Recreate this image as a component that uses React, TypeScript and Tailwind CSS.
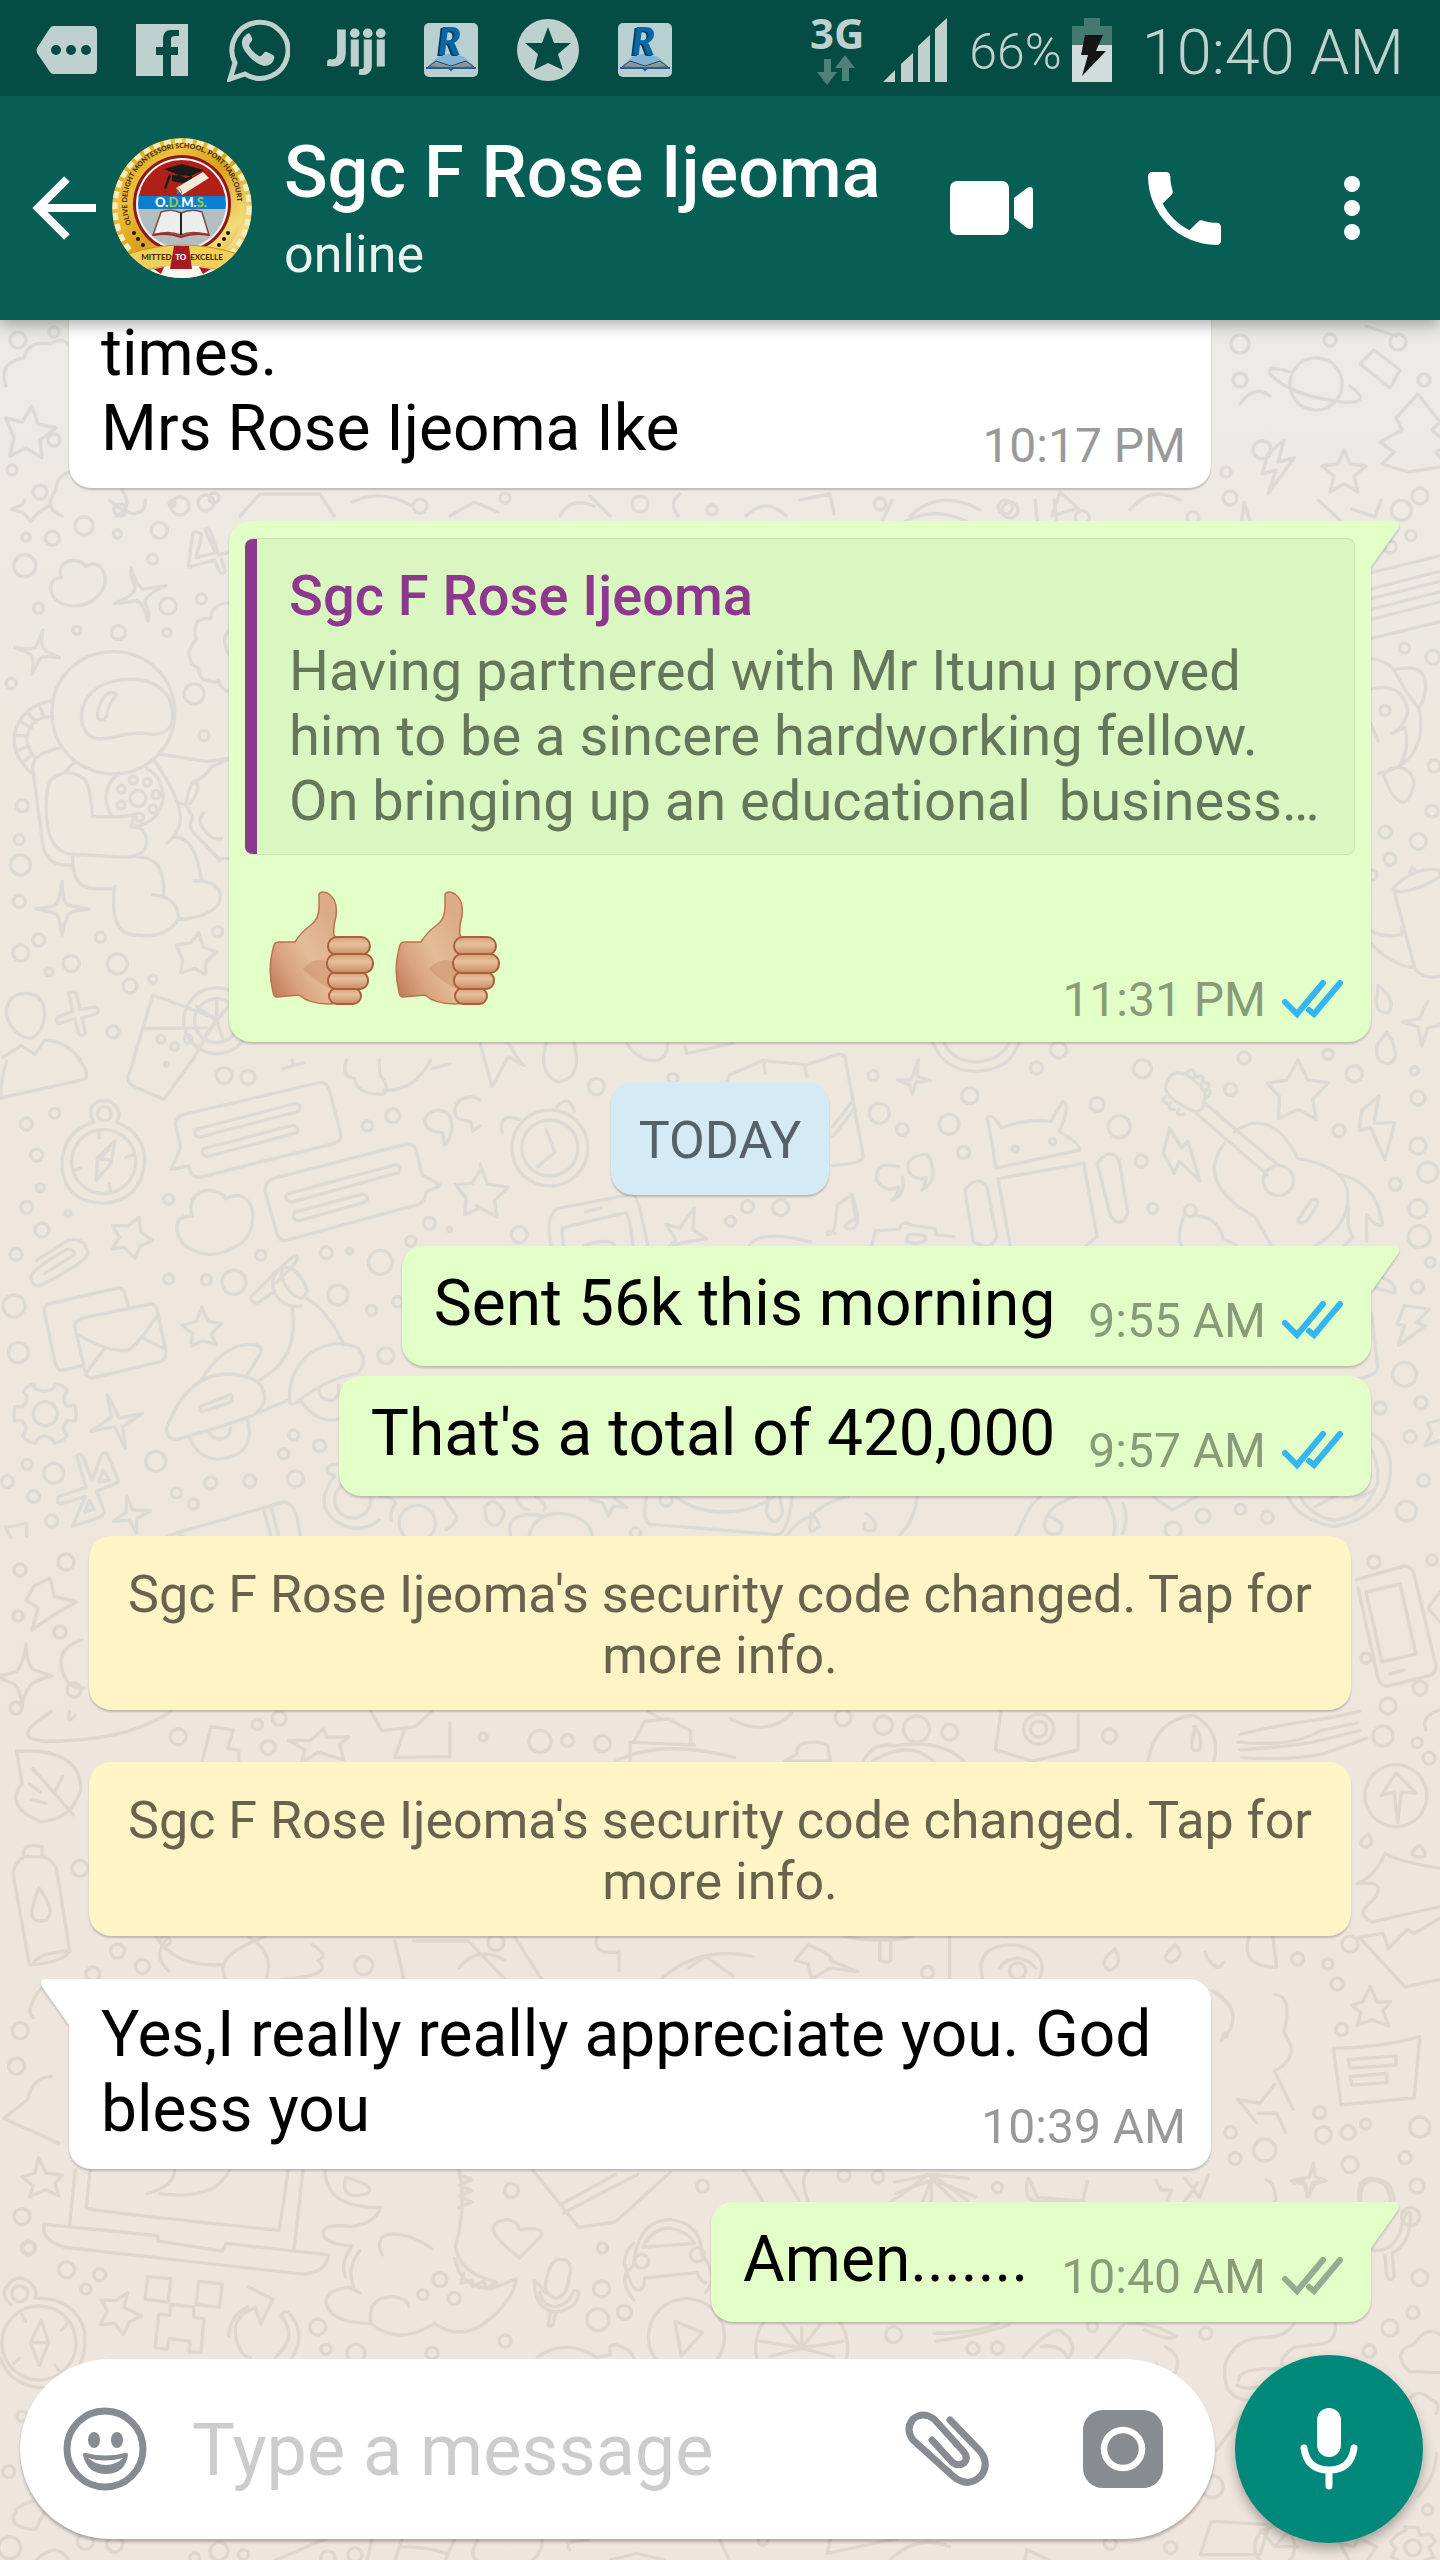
import type { ReactNode } from "react";

/* ---------- Wallpaper ---------- */

type Ring = [number, number, number];

type RegionProps = {
  x: number;
  y: number;
  sx: number;
  sy: number;
  color: string;
  rings: Ring[];
  paths: string[];
};

const COOL = "#dcdad6";
const WARM = "#dfd7cd";

/* One part of the doodle wallpaper, with its own drawing scale. */
function Region({ x, y, sx, sy, color, rings, paths }: RegionProps) {
  return (
    <g stroke={color} strokeWidth="3.4" fill="none" strokeLinecap="round" strokeLinejoin="round">
      {rings.map(([cx, cy, r], i) => (
        <circle key={i} cx={x + cx / sx} cy={y + cy / sy} r={r} />
      ))}
      <g transform={`translate(${x} ${y}) scale(${1 / sx} ${1 / sy})`}>
        {paths.map((d, i) => (
          <path key={i} d={d} vectorEffect="non-scaling-stroke" />
        ))}
      </g>
    </g>
  );
}

const regions: RegionProps[] = [
  {
    x: 0, y: 320, sx: 1, sy: 1, color: COOL,
    rings: [[18, 20, 8], [54, 12, 5], [12, 150, 5], [54, 120, 6], [40, 172, 7], [120, 190, 6], [180, 186, 9], [214, 178, 5],
      [420, 186, 7], [505, 178, 5], [640, 184, 8], [712, 190, 5], [880, 184, 6], [1010, 190, 8], [1240, 60, 7], [1262, 130, 9],
      [1226, 152, 5], [1398, 22, 8], [1424, 60, 6], [1330, 20, 6], [1240, 24, 9], [1420, 176, 8], [1230, 178, 7]],
    paths: [
      "M6 66q-8-24 18-28 4-18 26-14 16-10 22 8",
      "M6 98l16 4 10-16 6 18 18 4-16 12 2 18-16-10-16 8 4-18z",
      "M62 196q-20-8-6-26 0-18 24-20 10-14 26-2 20 0 16 22 12 18-6 26",
      "M240 196l20-22h60l14 22M352 182q30-14 60 4M450 196l24-14 24 10M560 196q10-20 34-10M590 176l20 20M680 174q-12 8-2 22",
      "M746 196q20-20 40 0M800 180l30-6 4 20M910 196q30-28 70-6M1060 172l-8 24 26-8zM1130 190q20-26 50-10",
      "M1290 62a26 26 0 1 0 52 4a26 26 0 1 0-52-4M1290 52q-24-8-20 2 20 22 72 28 32 2 8-16",
      "M1268 134l16-14-6 22 16-4-26 36 8-24-14 4z",
      "M1240 84q14-20 30-8",
      "M1408 152l-26-8 12-12-14-10 22-12-6-12 22-24 22 28-8 8 16 14-12 8 10 14z",
      "M1344 130l6 14 16 2-12 10 4 16-14-8-14 8 4-16-12-10 16-2z",
      "M1360 44l14-14 26 20-10 18zM1366 6l30 10",
    ],
  },
  {
    x: 0, y: 500, sx: 3, sy: 2.8, color: COOL,
    rings: [[78, 104, 4], [157, 107, 7], [252, 72, 9], [352, 95, 4], [478, 85, 8], [74, 184, 11], [458, 166, 5], [116, 303, 5],
      [504, 297, 8], [604, 277, 5], [230, 365, 4], [355, 371, 7], [501, 371, 4], [34, 514, 5], [582, 543, 10], [612, 660, 5],
      [67, 856, 6], [58, 951, 5], [61, 1022, 10], [58, 1124, 6], [116, 1232, 6], [62, 1268, 8], [214, 1298, 8], [147, 1321, 4],
      [301, 1224, 5], [352, 1299, 10], [390, 1361, 7], [458, 1341, 4], [653, 1209, 5], [339, 1489, 6], [483, 1510, 4], [524, 1530, 4],
      [564, 1509, 4], [516, 10, 3], [618, 8, 8], [414, 836, 8], [400, 784, 4], [442, 791, 4], [468, 825, 4], [459, 865, 4],
      [419, 888, 4], [363, 854, 4], [364, 810, 4], [650, 1458, 22], [650, 1458, 33]],
    paths: [
      "M36 26l30-12 8-14M150 14l-34 20-24 26-22-24-34-10",
      "M330 2q50 38 74 36 34-6 32-38",
      "M184 218q-12-40 28-48 34-4 44 16 34-18 52 10 18 34-6 64-34 40-90 36-56-6-60-50 2-28 32-28",
      "M394 190q14 50 36 60l68-10q-56 22-64 44 18 34 10 54-14-48-34-56l-66 8q58-22 62-44-18-38-12-56z",
      "M128 364q-8 44 8 58l42 20q-48-8-58 2-14 24-24 44 8-48-8-58l-44-18q50 8 62 2 14-24 22-50z",
      "M594 92q-14-8-16 4l-12 84q-2 10 8 6l70-18 14 32q10 12 18-2l-12-32M616 84q8-8 16 4l24 66 26-6M594 92q12 0 10 8l-16 62 58-14-30-64",
      "M687 288q-50 0-56 44-48-4-46 36-4 14 6 20-34 36-20 56 0 18 24 26 0 32 34 38 20 4 26-4 8 28 32 32M687 364q-26 26 0 70",
      "M340 425c100 0 184 70 184 170s-84 172-184 172-184-72-184-172 84-170 184-170z",
      "M392 502c80 0 118 40 124 84 8 40-4 70-60 70-80-12-120 18-164 12-36-6-56-40-44-86 12-44 60-80 144-80z",
      "M318 544q22-12 32 2-28 30-30 58-6 16-22 10-12-8 2-44z",
      "M156 562q-70 10-100 60-40 76 38 142M150 606q-60 4-70 60 2 34 26 56M60 620l34 18M84 596l24 26M118 574l12 30M42 660h38M50 702l36-12M66 736l30-22",
      "M184 694q-90 14-86 60l32 220q14 44 60 48h28",
      "M220 738q-16 10-22 26 64-2 72 62l8 60q90 4 128-6-10 20-12 36 42-2 46 36 2 48-68 48l-154-8q-60-4-76-80-8-60 2-112 14-32 62-38",
      "M318 832a92 86 0 0 1 38-66M440 752a92 86 0 0 1-48 162M318 832q0 30 18 52",
      "M218 994q-4 90 60 94l66 0M344 1082q-18 134 60 136 96 12 132-46-2-48-50-62l-28-4M412 1000q86-2 78 106",
      "M464 732q100 130 70 190-8 18-34 40M520 944q64-6 84 118M582 1066q70-2 80 40-2 60-124 68",
      "M484 712l134 20 66-8M540 850l18 2q10-60 28-62 20 10-14 60M580 790q30-10 56-44l50-20M558 854l20 36q-20 30 22 60l60 60M610 876q-20 24 0 44 24 34 54 28M656 1010q8-10 28-6",
      "M186 1068q2 56 16 66l66 12q-54 4-62 14-14 24-20 58-6-50-18-60l-60-14q52-4 62-12 12-24 16-64z",
      "M528 1246l44-6 24-28 14 40 42 14-34 24-2 38-32-16-42 12 6-36z",
      "M76 1382q58 0 58 60-4 48-40 66-42-4-62-38-22-36-8-58 12-30 52-30z",
      "M206 1380q18-8 24 4l10 42 46-6q14 6 4 18l-44 12 10 44q-10 12-20 0l-12-42-48 14q-12-6-4-18l46-16z",
      "M400 1568l58-182 192 66-72 116M430 1480l190-2M650 1458l-60-40M650 1458l0-56M650 1458l34-40M650 1458l-40 50M650 1458l20 56",
      "M10 1560l54-32 40 24 30-40q60 0 108 56",
    ],
  },
  {
    x: 0, y: 1060, sx: 3, sy: 3, color: COOL,
    rings: [[79, 192, 6], [164, 160, 5], [110, 285, 6], [121, 383, 4], [80, 442, 6], [204, 461, 3], [126, 510, 7], [506, 418, 5],
      [48, 583, 6], [42, 738, 11], [55, 878, 10], [506, 657, 5], [619, 659, 5], [702, 667, 12], [782, 586, 5], [979, 578, 6],
      [1049, 573, 3], [1141, 607, 12], [1014, 705, 10], [1115, 751, 5], [1193, 725, 5], [1158, 887, 8], [1288, 490, 6], [1348, 508, 2],
      [1232, 544, 5], [1102, 198, 5], [1179, 167, 7], [672, 46, 8], [744, 52, 7], [881, 1125, 5], [851, 1181, 5], [959, 1157, 6],
      [886, 1257, 8], [749, 1263, 6], [632, 1269, 6], [529, 1298, 5], [580, 1332, 5], [467, 1204, 10], [161, 1240, 10], [82, 1213, 5],
      [22, 1265, 6], [101, 1310, 6], [155, 1383, 6], [311, 305, 32], [313, 161, 7], [136, 1061, 12], [1058, 1320, 18], [1252, 1390, 18], [500, 13, 2]],
    paths: [
      "M20 4q-18 50-18 110l250-56q20-14-14-58M400 4l-16 44q-2 20 16 30l92 40L574 4",
      "M282 186q-20-30 0-54 30-22 60 0 26 28 8 54 90 40 84 126-14 108-122 118-116-2-126-108-4-106 96-136z",
      "M344 244l-10 66-46 50 4-66zM292 294l44 8M296 212l2 22M378 292l22-8M222 332l22-8M328 372l4 26M304 290l22-22",
      "M550 164l408-96q24-2 30 22l34 130q4 24-18 30l-406 102q-26 0-32-34l-52 10 28-66-16-68q0-22 24-30z",
      "M588 208l300-78q20 6 8 24l-300 78q-18-6-8-24zM610 266l270-70q20 6 10 22l-268 72q-22-6-12-24z",
      "M820 356l400-104q26-2 32 30l14 62 56 32-44 20q-4 32-26 38L856 542q-18 2-26-24l-34-122q-4-30 24-40z",
      "M860 402l330-88q18 10 6 24l-320 88q-24-2-16-24zM884 456l206-54q20 8 8 24l-200 56q-26-4-14-26z",
      "M576 468q-14-60 40-76 46-4 60 24 60-30 82 34 6 70-40 104-60 40-120 24-66-20-68-78 4-34 46-32z",
      "M338 496l46 2 32-26 6 44 36 26-38 16-14 38-34-34-34 4 20-34z",
      "M110 602l92-60q54-14 62 38-6 26-140 96-28 8-32-24 6-26 110-84 20-4 22 16l-90 56",
      "M190 930q-16 6-24-20l-34-160q2-14 14-18l206-48q18 0 22 14l12 44M190 930l54-12",
      "M248 774l202-42q18 0 22 20l26 124q0 20-14 28l-208 50q-16 0-20-18l-32-138q2-18 24-24zM228 820q100 60 156 50 20-6 86-100M256 944l58-80M424 832l68 34",
      "M546 796l42-12 18-42 18 42 40 6-30 32 14 32-40-12-34 16 4-38z",
      "M822 640l62-54q12 4 4 20l-58 62M822 640l-70 72q4 20 24 16l48-36M848 622q48-4 74 70-10 26-22 22-40-12-56-70zM848 622q-36 16-28 68 28 58 84 48M876 740q26 150-96 220M920 716q60 30 112 138",
      "M598 968q70-110 140-114 50-6 44 26l-40 64M530 1138q-30 0-30-34 60-160 180-162 110 2 114 70-4 34-34 54-110 40-230 72zM604 1038l88-34q10 12-4 24l-78 26q-18 0-6-16zM570 1136q26 60 86 62 92-10 92-80l-6-44M626 1118q20 26 48 16 18-10 18-32",
      "M870 1030q-10-90 60-150 80-50 146-14 30 40-4 74-100 18-182 88-14 8-20 2zM780 1056l90-38M906 1026q50 70 120 50M956 986q4 40 44 34 20-10 16-44",
      "M130 994q-30-4-28-22-24 4-32 22 24 24-2 46h-24q-4 22 0 42h22q22 22 2 46 10 18 38 22 4-18 26-22 28 4 32 22 22-4 38-22-22-24 0-46h24q6-22-2-46l-24 2q-18-22 2-46-10-16-36-22-4 22-36 24z",
      "M322 1004l36 70 70-14-60 40 8 66-32-66-72 14 62-42z",
      "M230 1188q8-10 18 0l28 74 30-80q10-8 18 4l32 80-66 28 24 62q-2 16-96 42l38-88-76 22q-14-8-4-22l82-28zM310 1230l18 30-32 6zM268 1322l14 26-28 8z",
      "M380 1308l18 42 54 2-42 24v44l-22-40-48 4 38-26z",
      "M16 1402l64-12v40M16 1402l16 30M500 1428l350-102q40-2 50 100M790 1346l24 88M812 1338l24 90M540 1424l16 10",
      "M1002 1246q-26-6-18-24 8-12 24-8M1002 1250q-60 80 0 130 70 50 136 0M1140 1310q40 0 48 20-20 20-14 50M1330 1310l40 60q-10 30-32 40",
      "M1304 152q50-6 52 46-4 44-24 58l-4-38q-50-4-54-36 4-24 30-30zM1440 120q-30-20-60 0-20 20-14 46 10 16 46 18l6 30 22-16",
      "M1440 330l-24 40-50 4 32 40-4 50 46-20",
      "M848 26l64-18M876 0l4 16M1040 0q-20 50 24 56 6 50 86 46 20-14-2-46-12-10-10-56M1152 90q90 6 140-90M1296 26l54-14",
    ],
  },
  {
    x: 480, y: 1040, sx: 1.6333, sy: 3, color: COOL,
    rings: [[190, 140, 8], [315, 115, 5], [642, 107, 5], [800, 167, 8], [652, 220, 10], [690, 268, 6], [766, 253, 10], [790, 337, 6],
      [909, 84, 6], [945, 30, 8], [1008, 193, 7], [1044, 260, 11], [1082, 86, 9], [1080, 363, 6], [1226, 148, 6], [1248, 54, 6],
      [1385, 43, 5], [1428, 101, 8], [1526, 92, 4], [1532, 174, 7], [1403, 272, 6], [1532, 318, 8], [1548, 397, 10], [1495, 433, 6],
      [1532, 506, 9], [1534, 590, 11], [1552, 667, 5], [1531, 741, 6], [64, 584, 8], [437, 500, 6], [491, 503, 8], [409, 544, 5],
      [1099, 505, 5], [1510, 1003, 12], [1470, 1104, 6], [1537, 1088, 6], [1519, 1190, 6], [1541, 1322, 6], [1513, 1413, 10],
      [1242, 1408, 5], [1181, 1428, 7], [1286, 1432, 6], [1132, 1470, 8], [254, 1478, 5], [304, 1380, 6], [114, 324, 38], [114, 324, 28],
      [874, 327, 3], [935, 305, 3], [1304, 422, 15], [1160, 512, 6]],
    paths: [
      "M0 10l20 130 26-90 26 26M46 10l22 60M108 10q-14 90 20 116 40-10 26-116M240 10q20 60 52 50 16-12 14-50M334 20l4 20 74-30M0 372l12 60 34 10-22 40 4 50-34-36",
      "M740 10q20 84 70 84 54-2 70-84M758 10q16 54 52 56 38-4 54-56M400 140l8-36 54-42 72 12 50-30q8-4 12 6l30 300q0 20-50 26M464 64l2 36M530 76l4 32M610 180l-34 80M610 210l-34 80",
      "M36 276q-6-60 28-38M126 200q20-40 28 14M108 268l14 70-26 40M120 340l-26 40",
      "M716 60l-12 60-22 0 20 16 4 26 6-36 24-4-22-14z",
      "M684 380q-40-20-36 40 12 40 36 22-4 30-12 40 24-20 18-70M730 344q-36 0-30 50 10 30 28 18 0 24-6 38 20-20 18-60-2-30-10-46",
      "M116 616q-10-90 10-110l124-44q8 4 24 154M136 616l-2-52 104-46q6 0 12 98M172 516l26-12",
      "M350 504l-24 60-22-10 16 46-12 20 28-14 34-10-22-26zM580 580q-14-14-12 4 10 0 12-30l4-60 24-30 6 76q-12 0-18 20 8 14 18 0 8-20-6-92",
      "M842 384l-6-80-8-70q6-20 24 30 40-30 80-20l20-60q14 6-6 90 36 40 34 56zM866 616l-20-200 140-46 22 220-18 26M792 450q20-50 36-10l16 150q-10 40-24 26l-14-10zM1008 370q20-50 36-10l14 160q-10 50-28 10z",
      "M1126 264l20 60 10-20 20 120-34-60-8 36-18-60zM1440 210l28-40-8 80 34-2-16 110-24-96-18 10z",
      "M1336 60l16 60 34 8-26 50 6 60-30-30-32 28 2-66-20-40 32-10z",
      "M1166 214q-50-40-46-80 10-50 34-30 40 50 28 80 0 34-16 30zM1156 96q10-20 12 16M1172 110q14-10 6 24M1180 128q18-4 6 24M1184 148q16 0 4 22M1120 170q-10 10 2 20M1128 188q-8 20 6 20M1142 206q-8 24 8 16",
      "M1166 214l120 190M1184 190l120 186M1216 310q-50 120 50 220l26 86M1232 276q60-80 104 80 70 20 80 90 10 100-50 170M1336 540l20-56q14-16 12 10l-18 50q-14 10-14-4z",
      "M1404 404q60 20 70 150-10 10-26-30v80M1418 500q-2 70 8 90l-14 26",
      "M1164 526q40 0 50 70l20 18M1150 526q-14 70-4 90M640 616l6-44 40-4q0-30 20-12l38 10v18l30 6M700 584q30-4 28 14-14 20-32 6zM440 616q20-50 100-10M170 616q40-24 50 0",
      "M1456 740l38 20q4-30-24-50M1510 796l40 12-20 40 14 10-44 58 10-60-12-4zM1456 820l10 160q-2 30-34 36",
      "M1568 1140l-20 10 6 30-10 36 24-14M1440 1170q40 20 46 90 10 160-90 200-60-20-76-90M1440 1200q30 40 26 130-20 100-70 110-40-10-56-70M1364 1400l90-90M1430 1380l30-30",
      "M272 1370q-10 90 14 84l200 30q16 0 24-114M320 1370q30 46 80 46 50-4 80-46M470 1370l-2 50q14 50 26 0l-4-50M180 1380l20 8 10 40 8-30 22 4-20-26M8 1400q16-40 32 20-10 60-30 20zM60 1370q0 30 20 40M92 1370q20 30 12 40M80 1490q10-80 60-68 40 14 44 68M50 1490q-10-80 50-64",
      "M540 1420q14 20 14 40-20 30-14-10 0-50 60-80M630 1420q20 20 14 50-20 10-16-20M500 1490q20-50 40-60M714 1370q-4 70-30 120M876 1490q20-100 40-120M930 1430q30 20 16 50-20 10-24-20 0-60 50-90M1020 1370q24 60 14 120M1050 1390q10 40 0 90M1100 1370l30 40 40-40",
    ],
  },
  {
    x: 840, y: 500, sx: 2.6133, sy: 2.6133, color: COOL,
    rings: [[432, 18, 7], [633, 46, 7], [922, 46, 6], [1467, 27, 10], [1492, 93, 5], [1438, 123, 6], [1475, 387, 5], [1549, 411, 7],
      [1553, 695, 6], [1547, 813, 6], [1425, 868, 6], [1511, 892, 8], [1437, 939, 6], [1390, 980, 5], [1501, 1492, 4], [1344, 1500, 8],
      [1276, 1449, 5], [1424, 550, 5]],
    paths: [
      "M1388 190l180-44M1388 232l180-46M1388 258l180-46M1388 286l180-46M1388 312l180-46M1388 362l180-44",
      "M1388 414q40 6 60 30 80-20 82 40 0 40-18 60 16 60-10 110-30 50-94 60M1388 494q80-20 96 56-6 40-40 60l32-16q14 60-14 100M1388 586l18 44M1448 444q30 60 64 100M1420 720q10-20 40-22 40 10 40 46-20 80-60 20z",
      "M1446 1014q60-60 122-46v16q-60 40-110 40-14-2-12-10zM1488 974l8-14 10 10M1446 1014l56 210q20 30 66 20M1388 1126q40 20 80 10v-20M1388 1160q60 60 114 62",
      "M1406 1268q50 40 28 70-36 6-32-30zM1430 1390q40 70 4 84-40-4-30-50z",
      "M1536 1310l-22 46-44 8 40 12 10 52 16-48 32-8M1250 0l60 56M1338 24l60 20 16-44M1050 56l6-50 16 50M110 56L136 0M170 56q80-40 160 0M510 0l6 56M560 0l6 56",
    ],
  },
  {
    x: 0, y: 1540, sx: 1, sy: 1, color: WARM,
    rings: [[20, 30, 6], [66, 22, 8], [60, 92, 6], [18, 76, 5], [74, 150, 7], [16, 168, 6], [1374, 22, 6], [1420, 148, 7], [1366, 118, 5],
      [1388, 166, 8], [1432, 20, 5]],
    paths: [
      "M26 104q0 20 8 26l18 6q-18 4-22 10-6 8-8 20-2-18-8-22l-18-8q18-2 22-6 6-10 8-26z",
      "M34 46l16-8 4 18 22 6-24 14-20 14 6-22-12-8z",
      "M82 100q-26 8-20 30 6 20 22 18",
      "M1356 40l48-14q8 0 10 8l22 92q0 8-8 10l-40 10q-8 0-10-8l-20-90M1366 52l34-8 16 70-34 8zM1390 134l14-4",
      "M1440 52l-12 16 12 14M1440 170q-20 6-14 20",
    ],
  },
  {
    x: 0, y: 1700, sx: 1.0889, sy: 2.6133, color: WARM,
    rings: [[194, 96, 8], [280, 64, 5], [304, 48, 7], [292, 124, 7], [526, 96, 4], [588, 108, 11], [618, 106, 6], [656, 114, 8],
      [918, 46, 8], [962, 66, 9], [998, 76, 13], [1034, 84, 8], [1208, 94, 7], [1506, 94, 10], [1543, 112, 5], [1556, 152, 6],
      [87, 440, 8], [128, 656, 7], [155, 696, 7], [101, 716, 7], [180, 630, 5], [396, 694, 9], [22, 864, 8], [18, 957, 8],
      [540, 634, 8], [1010, 712, 6], [1413, 677, 6], [1470, 638, 8], [1446, 690, 5], [1456, 742, 6], [1461, 861, 6], [1340, 1130, 6],
      [1437, 1078, 6], [1487, 1108, 5], [1441, 1136, 8], [1468, 1130, 7], [1546, 1116, 10], [1377, 1176, 11], [1345, 1198, 6],
      [1470, 1214, 8], [1530, 1196, 6], [557, 1282, 7], [765, 1270, 6], [919, 1242, 6], [956, 1246, 6], [1086, 1274, 5],
      [24, 1350, 8], [31, 1432, 7], [1536, 1350, 9], [1520, 250, 31], [1131, 76, 8], [1131, 76, 15], [1108, 708, 8], [1334, 876, 2]],
    paths: [
      "M56 30q-60 90 20 76 70-10 110-76M76 30q-4 40 6 10M230 70l24 8-6 48 12 6v28M230 70l-10 90M352 76l-14 30h-24l18 24-4 36 18-30 28 20-4-40 10-20-24 2z",
      "M404 30l12 50 36-10 18-40M440 80l-10 70 60-2V60M690 110l12-54 26-6 24 30v36M686 160v-50l70 8M670 160q50-60 130-10M706 30l14 20M796 50q40 50 66-16",
      "M886 110q-20 0-18 30l-14 20 50 0-2-30q2-20-16-20zM940 160q10-50 34-40 50-20 76 40M950 160q40-60 66 0M1090 30l-6 100 40 30 50-30V40M1250 160q8-110 50-120 30 40 22 120M1300 70q10 20 6 60-14 14-4-60",
      "M1350 90q50-30 100-44l30-16M1348 110q60 14 90-30l40-20M1350 130q60-10 80-20l50-30M1352 150q50 10 90-10l46-40",
      "M18 134q70-10 70 100-10 80-44 84-40-40-20-100zM36 180l44 120M44 240l-12-20M60 240l8-40M50 270l-16-10",
      "M26 410q-4-40 20-26v24q14 14 16 40l14 210q-10 30-44 34L14 450q4-30 12-40zM26 410h20M36 690q6-30 40-34M42 490q20 60 8 86-20 10-14-40z",
      "M1520 190l-16 60 14-10 4 80 4-80 16 4zM1490 350q-16 30-2 34 10-6 2-34zM1546 380q-16 26-2 30 14 0 2-30zM1568 440q-50-20-60-40-10 60-30 80 40-10 10 60-10 20 6 40l74-40M1480 620l26-10 6 40 20-50 8 10 28-40M1480 620l50 130 38-20",
      "M170 618q20 80 70 74M184 618q-20 50 0 90M290 618q-60 50-44 112M340 640q20 30 6 40 20 40-40 50M270 618q30 40 20 110M440 730l-10-100M450 630h60l40 100M500 700q20-60 50-20M560 618l30 112M650 618q-6 50 24 40l0 50M750 700l18-30 30 50M720 730q40-90 100-60",
      "M880 640q30 30 24 40l30 30-30-10-20 30-4-40-14-10zM920 618q40 20 72 0M958 630v50q8 10 12 0v-50M1034 730V618M1070 730q-10-90 34-90 40 14 28 90M1088 700q20-50 40 0",
      "M1214 650q-20 40-6 56 16-10 6-56zM1280 640q-20 40-4 46 16-20 4-46zM1312 660q12 60 20 26M1360 618q-10 80 30 80l-4-80",
      "M1492 748l-8 40-12 10 10 20-4 32 16-14 18 16-6-40 8-24-14 2zM1452 910q50 0 94-30l-6 160-80 18zM1468 940l52-10v24l-50 8zM1470 984l40-8v24l-38 6z",
      "M46 750q-20 60-10 80M56 984q-20 0-26 60l-26 50 60 64M1388 770q20 0 10 100 20 60-10 100l20 100M1320 760q30 40 20 100l-10 30M1388 1004l-16 50-24-10 20 60M1370 1080l20 0 10 50",
      "M42 1196l-4 40-14 10 12 24-4 28 18-18 14 16-4-34 8-20-18-6zM98 1228l-4 100q0 6 210 58l10-160M82 1228l-6 140M48 1370l124 30v14l70 26 4-20 112 30q-4 50-30 50L70 1430q-26-20-22-60zM330 1228l-10 210M160 1290q30-20 30-62M174 1290q60 20 76-62",
      "M380 1250q30 20 20 40-30 20-24-40zM354 1228q0 100 60 98-4 40-30 50-40-10-30 30 10 20 30 20-14 40-8 80M416 1450q-10-60 18-54 20 8 36 38",
      "M500 1228q8 100-4 200 4 70 44 92M500 1240l14 14-14 14 14 14-14 14 14 16-14 14M566 1458q-50-90-14-100 10 0 14 26 30-10 22 20zM580 1228l50 150 40-14 60-130M614 1340l80-100M610 1320l60-80",
      "M690 1568q-20-60 0-90 4-120 40-120 34 10 34 90 20 60 4 100M700 1430q10-50 30-50 20 10 26 40z",
      "M810 1228l20 80M850 1228l20 80M880 1310q-10-60 0-80M1010 1240q-30 60-40 70M1014 1240q30 50 40 70M1014 1240v70M1014 1240l-40 20M1014 1240l40 10M1120 1250l10 50 50 10M1430 1210l-4 36-20 10 16 12 2 30 8-34 12-8-12-10zM1290 1250l16 50 10-60M1480 1310q-4-60 14-60 24 4 24 60",
    ],
  },
  {
    x: 0, y: 2180, sx: 2.1778, sy: 3, color: WARM,
    rings: [[145, 269, 8], [217, 284, 6], [187, 327, 5], [62, 204, 6], [692, 441, 8], [710, 508, 5], [775, 520, 9], [958, 298, 7],
      [921, 344, 5], [989, 355, 6], [1312, 204, 5], [1310, 327, 8], [1302, 419, 11], [1360, 397, 7], [1100, 483, 6], [941, 520, 6],
      [85, 489, 37], [43, 341, 8], [1397, 244, 7], [1519, 224, 7], [1495, 470, 38], [48, 709, 5], [19, 875, 6], [21, 1103, 11],
      [186, 1084, 8], [250, 1092, 8], [477, 1114, 9], [530, 1124, 5], [424, 1134, 5], [714, 1134, 7], [773, 1124, 7]],
    paths: [
      "M24 374q-20-20-12-50 30-60 64 0 4 20 0 30 90 0 108 100 10 140-80 170-80 0-104-90M90 420l-24 68 20 68 20-68zM66 488h40M48 404l8 20M146 430l-12 20M30 550l12-14M120 556l10 20",
      "M278 338l-8 44 38 26-26 18-14 38-18-34-32 4 16-40-14-34 32 2zM322 290l50 6-6 70-50-8zM432 304l52 8-6 70-50-8zM372 374l50 6v32l22 4-6 102-26-2 2-32-46-8-4 32-26-6 8-100 24 4z",
      "M540 320l54 38-26 74-12-50q-60 30-38 110 10 40 28 40M498 470q0-60 42-90M612 410q10-30 24 0 30 60 0 122M600 532q50-60 14-122",
      "M990 236l10 40q24 50 70 50 40-20 54-30 0 40-40 100-70 100-138 34-80 70-138 0-10-80 50-80 30 6 32 30M810 430q-90 0-100-60-4-40 50-48l24 16M770 320q-16-60 14-108M1010 280l-6 30 24-10 0 20 24-16 8 20 22-16",
      "M1188 338q-30-50-24-30 0 80 46 88 50-10 50-60-10-10-12 0-10 40-40 44-30-4-32-44M1220 238q30 0 20 50-4 60-30 68-30-16-20-60 10-60 30-58zM1198 396l-4 40q6 6 10 0l6-36M1470 424l60 34-46 70z",
      "M1380 190q-20 20-20 60 14 80 30 80 14 0 14-36l114-16q8 30 20 30",
      "M70 964q-40 20-36 30-20 50 44 54l24-66M80 1140q40-60 70 0M600 1140l110-64M800 1140l10-64M860 1140l16-64M970 1140l20-64M870 1100q60 0 100 20M1040 1080q-20 50 0 60M1180 1080q4 30-20 60M1240 1110q-10-20 10-26l30-4M1330 1140l56-20 60 20M1170 532q60-60 130 0M1300 532l30-8q-8-30 10-30 30 10 40 38",
    ],
  },
  {
    x: 720, y: 2180, sx: 2.1778, sy: 3, color: WARM,
    rings: [[378, 464, 8], [551, 506, 6], [604, 504, 6], [1058, 460, 6], [1459, 444, 8], [1509, 398, 6], [1524, 293, 8], [1414, 513, 6],
      [1518, 18, 7], [1072, 920, 11], [1541, 990, 5], [981, 1103, 6], [850, 1090, 6], [94, 1080, 5], [1509, 1103, 8], [1208, 1100, 20], [178, 504, 46], [811, 440, 5]],
    paths: [
      "M178 504l-40-70M178 504l40-70M178 504l-90-20M178 504l90-20M178 504l-70 26M178 504l70 26M178 504v-60",
      "M466 460q90 0 140-30M470 484q100-20 160-50M660 532q70-110 90-70 30 30 10 70M700 500q40-10 56 32M820 532l60-100M890 430q60 0 104 40-20 14-70-20M970 500q40 30 20 80-30 20-40-30",
      "M1340 432q4 50-30 60l-60 10q-40 40-20 60l50-10M1250 432q-20 40-60 40-70 0-90 80-10 110 60 110l-80 150M1130 600q0-30 60-34l50 0M1126 616q20 16 60 0",
      "M1500 574q-40-60 10-80 30-60 58-30M1500 574l68 4M1500 660q20-40 50 0 20 10 10 40M1070 1024l-24 100 130 0 20-90zM1208 1100l-30-50M1208 1100l30-46M1208 1100l50 0M1400 1060l-20 40-30-10 20 50M1400 1080l30 20-20 40",
      "M1494 1050q-8-14 4-8h22l4 24 22-4 12 22-14 18 10 30-18 8M1494 1050l-20 16-14 20 12 20-10 24 14 10M1520 950q40-60 40-130M370 1140q60-80 130-40M664 1140l4-30 50 30M0 1080l20 60M240 1080l-6 40 150-44",
      "M1420 210q40 10 60-50 14-80 24-60 2 90-40 120l4 70q-10 20-16-4l-4-60M1396 70q-6-70 30-70 34 10 34 70M670 0q-10 60 20 64h100l10-60M950 0l10 30 24 0-10 30M1250 10l20-10 10 50 10-40 20-8M460 0l-20 70M464 0l50 66M462 0l-80 40M466 0l90 50M1010 68l30-60M1210 68q0-60-20-68",
    ],
  },
];

function Wallpaper() {
  return (
    <svg
      aria-hidden="true"
      className="absolute inset-0 -z-10 h-full w-full"
      viewBox="0 0 1440 2560"
      preserveAspectRatio="xMidYMin slice"
    >
      {regions.map((r, i) => (
        <Region key={i} {...r} />
      ))}
    </svg>
  );
}

/* ---------- Status bar ---------- */

function ReaderIcon() {
  return (
    <svg className="h-[54px] w-[54px] overflow-visible" viewBox="0 0 54 54" aria-hidden="true">
      <rect width="54" height="54" rx="5" fill="#b8d0d2" />
      <path d="M4 43 14 34 27 30 40 34 50 43Z" fill="#7fb4d6" />
      <path d="M4 44 12 38 27 43 42 38 50 44 27 45Z" fill="#8b9697" stroke="#3b4a4c" />
      <path d="M2 45h23l2 2 2-2h23" stroke="#1f5fa8" strokeWidth="2" fill="none" />
      <text
        x="14"
        y="32"
        fontFamily="Lato"
        fontWeight="900"
        fontStyle="italic"
        fontSize="38"
        fill="#0868a6"
        className="drop-shadow-[-2px_1px_0_#083f55]"
      >
        R
      </text>
    </svg>
  );
}

function StatusBar() {
  return (
    <div className="flex h-24 items-center justify-between bg-[#054d44] pt-1 pr-9 pl-9 text-[#bfd1ce]">
      <div className="flex items-center gap-[39px]">
        <svg className="h-12 w-[61px]" viewBox="0 0 61 48" aria-hidden="true">
          <path d="M18 0h38q5 0 5 5v38q0 5-5 5H18q-3 0-4-2L1 27q-1-3 0-5L14 2q1-2 4-2Z" fill="currentColor" />
          <g fill="#054d44">
            <circle cx="20" cy="24" r="5" />
            <circle cx="35" cy="24" r="5" />
            <circle cx="50" cy="24" r="5" />
          </g>
        </svg>
        <svg className="h-[52px] w-[52px]" viewBox="0 0 52 52" aria-hidden="true">
          <path d="M0 0h52v52H35V31h7V23h-7v-8q0-3 4-3h4V6h-8q-8 0-8 9v8h-7v8h7v21H0Z" fill="currentColor" />
        </svg>
        <svg className="h-[63px] w-[63px]" viewBox="0 0 63 63" aria-hidden="true">
          <path d="M3 60 8 44A28 28 0 1 1 18 55Z" fill="none" stroke="currentColor" strokeWidth="5" />
          <path d="M18 17q-5 4-2 12 8 14 21 18 8 0 10-7 1-3-1-4l-6-3q-2-1-4 2-2 3-4 2-7-4-10-10 0-2 2-4 2-2 1-4l-2-4q-2-2-5 2Z" fill="currentColor" />
        </svg>
        <svg className="h-[63px] w-[56px] overflow-visible" viewBox="0 0 56 63" role="img" aria-label="Jiji">
          <text x="-2" y="47" fontFamily="Lato" fontWeight="900" fontSize="50" fill="currentColor" stroke="currentColor" strokeWidth="1">Jiji</text>
        </svg>
        <ReaderIcon />
        <svg className="h-[62px] w-[62px]" viewBox="0 0 62 62" aria-hidden="true">
          <circle cx="31" cy="31" r="31" fill="currentColor" />
          <path d="M31 8 37 24 54 24 41 35 46 51 31 44 17 51 21 35 8 24 25 24Z" fill="#054d44" />
        </svg>
        <ReaderIcon />
      </div>
      <div className="flex items-center">
        <div className="mr-[19px] flex flex-col items-center">
          <span className="font-['Noto_Sans'] text-[42px] leading-9 font-bold">3G</span>
          <svg className="mt-1 h-[30px] w-10" viewBox="0 0 40 30" fill="#4f8079" aria-hidden="true">
            <path d="M7 4h7v13h6L10 30 0 17h7ZM28 0 38 13h-6v13h-7V13h-7Z" />
          </svg>
        </div>
        <svg className="mr-[22px] h-16 w-16" viewBox="0 0 64 64" fill="currentColor" aria-hidden="true">
          <path d="M0 64 12 52V64ZM18 46 30 35V64H18ZM35 28 47 17V64H35ZM52 11 64 0V64H52Z" />
        </svg>
        <span className="mr-[10px] pt-1 text-[50px] leading-none font-light">66%</span>
        <svg className="mr-[30px] h-16 w-10" viewBox="0 0 40 64" aria-hidden="true">
          <path d="M12 0h16v8h12v19H0V8h12Z" fill="#43796f" />
          <path d="M0 27h40v37H0Z" fill="#d0dddb" />
          <path d="M13 17H31L24 33H34L10 58 16 37H9Z" fill="#151515" />
        </svg>
        <time className="pt-1 text-[63px] leading-none font-light">10:40 AM</time>
      </div>
    </div>
  );
}

/* ---------- Chat header ---------- */

function Avatar() {
  return (
    <svg className="h-[140px] w-[140px] rounded-full" viewBox="0 0 140 140" role="img" aria-label="Profile photo">
      <defs>
        <linearGradient id="gold" x1="0" y1="0" x2="1" y2="1">
          <stop offset="0" stopColor="#c98a13" />
          <stop offset="0.25" stopColor="#efc23d" />
          <stop offset="0.5" stopColor="#d9a01c" />
          <stop offset="0.8" stopColor="#f3dc7c" />
          <stop offset="1" stopColor="#c08a20" />
        </linearGradient>
        <clipPath id="disc">
          <circle cx="70" cy="66" r="44" />
        </clipPath>
        <path id="motto" d="M20 88A55 55 0 1 1 120 88" />
      </defs>
      <circle cx="70" cy="70" r="70" fill="url(#gold)" />
      <circle cx="70" cy="70" r="67" fill="none" stroke="#f5edc0" strokeWidth="5" strokeDasharray="7 4" />
      <circle cx="70" cy="67" r="62" fill="url(#gold)" />
      <circle cx="70" cy="66" r="49" fill="#8d1a16" />
      <circle cx="70" cy="66" r="46" fill="#f4f4f4" />
      <g clipPath="url(#disc)">
        <path d="M20 15h100v44H20Z" fill="#b02019" />
        <path d="M20 58h100v13H20Z" fill="#0d7fd0" />
        <path d="M20 71h100v45H20Z" fill="#b3bec2" />
      </g>
      <path d="M52 31 70 26 92 32 74 40ZM60 37V43Q72 47 80 42V38ZM57 36 52 50 54 51 59 38Z" fill="#1c1b1b" />
      <path d="M64 50 91 34 97 40 70 57Z" fill="#f2ead6" />
      <path d="M64 50q5-1 6 6" stroke="#a5874b" fill="none" />
      <path d="M66 51l-2 6 3-2 2 3z" fill="#2f83c9" />
      <text x="69" y="69" textAnchor="middle" fontFamily="Lato" fontWeight="900" fontSize="13" fill="#fff">
        O.<tspan fill="#9ccc3c">D.</tspan>M.<tspan fill="#9ccc3c">S.</tspan>
      </text>
      <path d="M49 74Q60 70 69 75 80 70 90 74L97 97Q80 92 69 97 56 92 41 97Z" fill="#eceded" stroke="#7e4b40" strokeWidth="1.5" />
      <path d="M41 97Q56 94 69 99 82 94 97 97" stroke="#a32a22" strokeWidth="2" fill="none" />
      <path d="M69 75V97" stroke="#222" strokeWidth="2" />
      <text fontFamily="Lato" fontWeight="900" fontSize="7" fill="#4a3206">
        <textPath href="#motto" startOffset="2">OLIVE DELIGHT MONTESSORI SCHOOL, PORT HARCOURT</textPath>
      </text>
      <g fill="#1d1508">
        <circle cx="22" cy="95" r="2" />
        <circle cx="26" cy="101" r="2" />
        <circle cx="31" cy="107" r="2" />
        <circle cx="116" cy="95" r="2" />
        <circle cx="112" cy="101" r="2" />
        <circle cx="107" cy="107" r="2" />
      </g>
      <path d="M16 116Q70 98 126 116L112 133Q70 122 28 133Z" fill="#f0d05a" stroke="#c1911d" />
      <path d="M38 132Q70 122 104 132L94 140H46Z" fill="#fbf6ee" />
      <path d="M62 108H77L80 131H58Z" fill="#a81a22" />
      <path d="M42 131l10-2-3 7zM99 131l-12-2 4 7z" fill="#a81a22" />
      <text x="70" y="122" textAnchor="middle" fontFamily="Lato" fontWeight="900" fontSize="8" fill="#4a3206" xmlSpace="preserve">
        {"MITTED  "}
        <tspan fill="#fff">TO</tspan>
        {"  EXCELLE"}
      </text>
    </svg>
  );
}

function ChatHeader() {
  return (
    <div className="flex h-56 items-center bg-[#075e55] px-8 text-white">
      <button type="button" aria-label="Back" className="mr-4">
        <svg className="h-16 w-16" viewBox="0 0 64 64" fill="none" stroke="currentColor" strokeWidth="8">
          <path d="M64 32H6M35 3 6 32 35 61" />
        </svg>
      </button>
      <Avatar />
      <div className="ml-8 flex-1">
        <h1 className="text-[72px] leading-[84px] font-medium whitespace-nowrap">Sgc F Rose Ijeoma</h1>
        <p className="mt-[9px] text-[52px] leading-[61px] text-[#eaf2f1]">online</p>
      </div>
      <div className="flex items-center pr-12">
        <button type="button" aria-label="Video call">
          <svg className="h-[54px] w-[84px]" viewBox="0 0 84 54" fill="currentColor">
            <rect width="59" height="54" rx="7" />
            <path d="M64 17 77 7q6-3 6 3v34q0 6-6 3L64 37Z" />
          </svg>
        </button>
        <button type="button" aria-label="Voice call" className="ml-[114px]">
          <svg className="h-[73px] w-[73px]" viewBox="3 3 18 18" fill="currentColor">
            <path d="M6.62 10.79c1.44 2.83 3.76 5.14 6.59 6.59l2.2-2.2c.27-.27.67-.36 1.02-.24 1.12.37 2.33.57 3.57.57.55 0 1 .45 1 1V20c0 .55-.45 1-1 1-9.39 0-17-7.61-17-17 0-.55.45-1 1-1h3.5c.55 0 1 .45 1 1 0 1.25.2 2.45.57 3.57.11.35.03.74-.25 1.02l-2.2 2.2z" />
          </svg>
        </button>
        <button type="button" aria-label="More options" className="ml-[123px]">
          <svg className="h-16 w-4" viewBox="0 0 16 64" fill="currentColor">
            <circle cx="8" cy="8" r="8" />
            <circle cx="8" cy="32" r="8" />
            <circle cx="8" cy="56" r="8" />
          </svg>
        </button>
      </div>
    </div>
  );
}

/* ---------- Messages ---------- */

function Checks({ read }: { read: boolean }) {
  return (
    <svg
      className={read ? "mb-[9px] ml-4 h-10 w-[61px] text-[#34b7f1]" : "mb-[9px] ml-4 h-10 w-[61px] text-[#92ad8f]"}
      viewBox="0 0 61 40"
      fill="none"
      stroke="currentColor"
      strokeWidth="6"
      strokeLinecap="round"
      role="img"
      aria-label={read ? "Read" : "Delivered"}
    >
      <path d="M3 23 15 35 41 4M27 31 32 35 58 4" />
    </svg>
  );
}

function Stamp({ time, state }: { time: string; state?: "read" | "delivered" }) {
  return (
    <div className={state ? "flex shrink-0 items-end text-[#8a9b78]" : "flex shrink-0 items-end text-[#999]"}>
      <time className="text-[48px] leading-14">{time}</time>
      {state && <Checks read={state === "read"} />}
    </div>
  );
}

function Outgoing({ tail, className, children }: { tail?: boolean; className: string; children: ReactNode }) {
  return (
    <div
      className={`relative max-w-[1142px] self-end rounded-[22px] bg-[#e1ffc7] drop-shadow-[0_2px_1px_rgba(0,0,0,0.2)] ${tail ? "rounded-tr-none" : ""} ${className}`}
    >
      {tail && (
        <svg className="absolute top-0 -right-7 h-[46px] w-[29px]" viewBox="0 0 29 46" fill="#e1ffc7" aria-hidden="true">
          <path d="M0 0H25Q31 1 28 8L1 46H0Z" />
        </svg>
      )}
      {children}
    </div>
  );
}

function ShortMessage({ text, time, state, tail, className }: {
  text: string; time: string; state: "read" | "delivered"; tail?: boolean; className: string;
}) {
  return (
    <Outgoing tail={tail} className={`flex items-end pr-7 pl-8 ${className}`}>
      <p className="pt-5 pb-[25px] text-[64px] leading-[75px] text-black">{text}</p>
      <div className="ml-[33px] pb-[17px]">
        <Stamp time={time} state={state} />
      </div>
    </Outgoing>
  );
}

function SecurityNotice({ className }: { className: string }) {
  return (
    <button
      type="button"
      className={`w-full max-w-[1262px] self-center rounded-[22px] bg-[#fff4c5] px-8 pt-7 pb-6 text-center text-[52px] leading-[61px] text-[#67634c] shadow-[0_2px_2px_rgba(0,0,0,0.2)] ${className}`}
    >
      Sgc F Rose Ijeoma's security code changed. Tap for more info.
    </button>
  );
}

function ThumbsUp({ id }: { id: string }) {
  return (
    <svg className="h-[114px] w-[106px]" viewBox="0 0 106 114" role="img" aria-label="Thumbs up">
      <defs>
        <linearGradient id={`${id}-hand`} x1="0" y1="0.9" x2="0.8" y2="0.2">
          <stop offset="0" stopColor="#bd7a56" />
          <stop offset="0.3" stopColor="#d9a27c" />
          <stop offset="0.6" stopColor="#e3bd98" />
          <stop offset="1" stopColor="#dcac86" />
        </linearGradient>
        <linearGradient id={`${id}-finger`} x1="0" y1="0" x2="0" y2="1">
          <stop offset="0" stopColor="#d69f77" />
          <stop offset="0.4" stopColor="#e6c09b" />
          <stop offset="1" stopColor="#c88c66" />
        </linearGradient>
      </defs>
      <path
        d="M50 3Q53-1 60 3 69 9 67 25 64 36 65 44L72 56V105Q70 113 60 113 40 113 30 104L8 106Q5 106 4 101-2 78 5 54 6 51 10 51H26Q32 41 42 34 50 28 50 16Z"
        fill={`url(#${id}-hand)`}
        stroke="#b8744f"
        strokeWidth="1.5"
      />
      <path d="M34 78Q46 64 62 72V98Q48 92 34 78Z" fill="#c98e66" opacity="0.5" />
      <g fill={`url(#${id}-finger)`} stroke="#a95f3c" strokeWidth="2">
        <rect x="60" y="97" width="32" height="16" rx="8" />
        <rect x="59" y="81" width="40" height="17" rx="8" />
        <rect x="59" y="46" width="42" height="18" rx="9" />
        <rect x="58" y="63" width="46" height="19" rx="9" />
      </g>
    </svg>
  );
}

/* ---------- Page ---------- */

export default function App() {
  return (
    <div className="relative isolate flex min-h-screen flex-col overflow-hidden bg-linear-to-b from-[#ebebe6] from-10% via-[#eee7dd] via-40% to-[#eee5de] font-[Roboto,sans-serif]">
      <Wallpaper />
      <header className="relative z-10 shadow-[0_4px_16px_rgba(0,0,0,0.35)]">
        <StatusBar />
        <ChatHeader />
      </header>

      <main className="flex flex-1 flex-col px-[69px]">
        <div className="-mt-1 flex w-full max-w-[1142px] items-end justify-between rounded-b-[22px] bg-white pr-[25px] pb-[22px] pl-8 shadow-[0_2px_2px_rgba(0,0,0,0.2)]">
          <p className="text-[64px] leading-[75px] text-black">
            times.
            <br />
            Mrs Rose Ijeoma Ike
          </p>
          <div className="-mb-2">
            <Stamp time="10:17 PM" />
          </div>
        </div>

        <Outgoing tail className="mt-[33px] w-full px-4 pt-[17px] pb-[14px]">
          <blockquote className="overflow-hidden rounded-lg border border-l-0 border-[#cbe5b5] bg-[#daf6c1]">
            <div className="border-l-[12px] border-[#8d378e] pt-6 pr-6 pb-5 pl-8">
              <p className="text-[56px] leading-[66px] font-medium text-[#8d378e]">Sgc F Rose Ijeoma</p>
              <p className="mt-[10px] text-[56px] leading-[65px] whitespace-pre-wrap text-[#66765a]">
                {"Having partnered with Mr Itunu proved him to be a sincere hardworking fellow. On bringing up an educational  business…"}
              </p>
            </div>
          </blockquote>
          <div className="flex items-end justify-between pr-3">
            <div className="mt-9 mb-[23px] ml-6 flex gap-5">
              <ThumbsUp id="first" />
              <ThumbsUp id="second" />
            </div>
            <Stamp time="11:31 PM" state="read" />
          </div>
        </Outgoing>

        <div className="mt-10 self-center rounded-[22px] bg-[#d4eaf4] px-7 pt-7 pb-6 text-[52px] leading-[61px] text-[#566168] shadow-[0_2px_2px_rgba(0,0,0,0.2)]">
          TODAY
        </div>

        <ShortMessage tail text="Sent 56k this morning" time="9:55 AM" state="read" className="mt-[51px]" />
        <ShortMessage text="That's a total of 420,000" time="9:57 AM" state="read" className="mt-[10px]" />

        <SecurityNotice className="mt-10" />
        <SecurityNotice className="mt-[52px]" />

        <div className="relative mt-[43px] w-full max-w-[1142px] rounded-[22px] rounded-tl-none bg-white pt-[18px] pr-[25px] pb-[22px] pl-8 drop-shadow-[0_2px_1px_rgba(0,0,0,0.2)]">
          <svg className="absolute top-0 -left-7 h-[46px] w-[29px]" viewBox="0 0 29 46" fill="#fff" aria-hidden="true">
            <path d="M29 0H4Q-2 1 1 8L28 46H29Z" />
          </svg>
          <p className="text-[64px] leading-[75px] text-black">Yes,I really really appreciate you. God bless you</p>
          <div className="absolute right-[25px] bottom-[14px]">
            <Stamp time="10:39 AM" />
          </div>
        </div>

        <ShortMessage tail text="Amen......." time="10:40 AM" state="delivered" className="mt-[33px]" />
      </main>

      <footer className="flex items-center gap-5 px-5 pt-8 pr-[17px] pb-[17px]">
        <form className="flex h-[180px] min-w-0 flex-1 items-center rounded-full bg-white pr-[52px] pl-[43px] shadow-[0_3px_3px_rgba(0,0,0,0.25)]">
          <button type="button" aria-label="Emoji">
            <svg className="h-[84px] w-[84px]" viewBox="0 0 84 84" fill="#868c92">
              <circle cx="42" cy="42" r="38" fill="none" stroke="#868c92" strokeWidth="7" />
              <ellipse cx="31" cy="33" rx="6" ry="8" />
              <ellipse cx="54" cy="33" rx="6" ry="8" />
              <path d="M20 48q0-3 3-2 19 5 39 0 3-1 3 2-3 19-22 19T20 48Z" />
              <path d="M25 51q17 5 35 0-7 7-17 7t-18-7Z" fill="#fff" />
            </svg>
          </button>
          <input
            type="text"
            aria-label="Type a message"
            placeholder="Type a message"
            className="ml-[45px] min-w-0 flex-1 bg-transparent pt-1 text-[72px] leading-[84px] outline-none placeholder:text-[#ccc]"
          />
          <button type="button" aria-label="Attach file">
            <svg className="h-[76px] w-[84px]" viewBox="0 0 84 76" fill="none" stroke="#868c92" strokeWidth="7" strokeLinecap="round" strokeLinejoin="round">
              <path d="M45 9 75 40Q85 53 76 65 63 77 49 66L8 29Q0 18 8 8 18 0 29 8L58 40Q64 47 59 52 53 56 47 51L27 29" />
            </svg>
          </button>
          <button type="button" aria-label="Camera" className="ml-[94px]">
            <svg className="h-[78px] w-20" viewBox="0 0 80 78">
              <rect width="80" height="78" rx="20" fill="#868c92" />
              <circle cx="40" cy="39" r="19" fill="none" stroke="#fff" strokeWidth="6.5" />
            </svg>
          </button>
        </form>
        <button
          type="button"
          aria-label="Record voice message"
          className="flex h-[188px] w-[188px] shrink-0 items-center justify-center rounded-full bg-[#00897b] shadow-[0_6px_12px_rgba(0,0,0,0.3)]"
        >
          <svg className="h-[82px] w-[60px]" viewBox="0 0 60 82" fill="none" stroke="#fff" strokeWidth="7" strokeLinecap="round">
            <rect x="18" y="0" width="24" height="49" rx="12" fill="#fff" stroke="none" />
            <path d="M5 40Q8 62 30 62T55 40M30 62V78" />
          </svg>
        </button>
      </footer>
    </div>
  );
}
